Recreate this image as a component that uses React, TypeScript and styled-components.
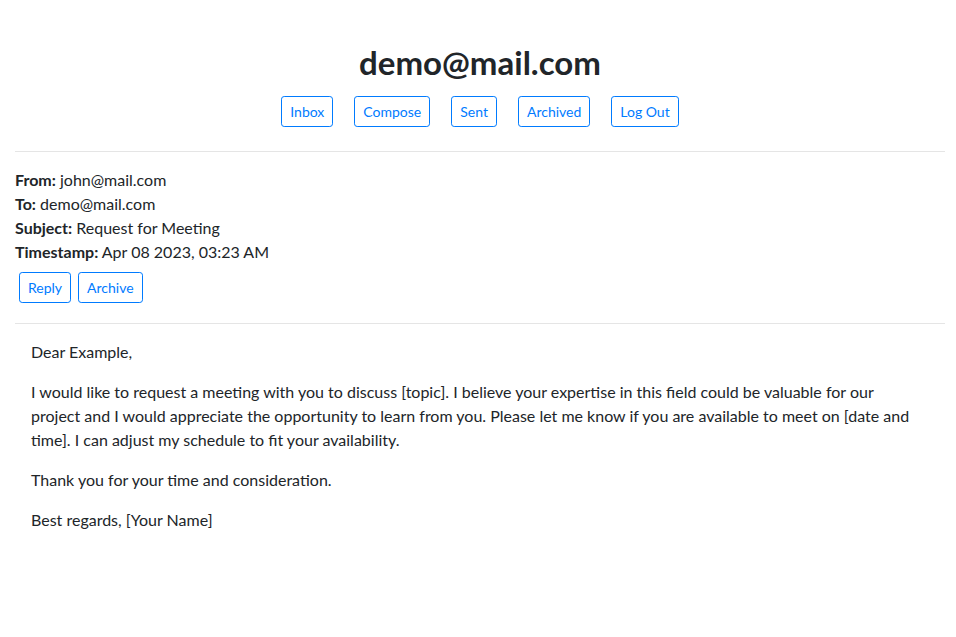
import * as React from 'react';
import styled, { createGlobalStyle } from 'styled-components';

const GlobalStyle = createGlobalStyle`
  html, body {
    margin: 0;
    padding: 0;
    background: #ffffff;
  }

  body {
    font-family: 'Segoe UI', Lato, 'Noto Sans', sans-serif;
    font-size: 16px;
    line-height: 1.5;
    color: #212529;
  }
`;

const Page = styled.div`
  padding: 0 11px 0 15px;
`;

const Header = styled.div`
  padding-top: 43px;
  text-align: center;
`;

const Title = styled.h2`
  margin: 0 0 15px 0;

  font-size: 33px;
  font-weight: 700;
  line-height: 38px;
`;

const Nav = styled.div`
  display: flex;
  justify-content: center;
  gap: 21px;
`;

const Button = styled.button`
  display: inline-block;
  box-sizing: border-box;
  height: 31px;
  padding: 4px 8px;

  font-family: inherit;
  font-size: 14px;
  line-height: 1.5;
  font-weight: 400;
  color: #007bff;

  background: transparent;
  border: 1px solid #007bff;
  border-radius: 3.2px;
  cursor: pointer;
`;

const Rule = styled.hr<{ $top: number }>`
  margin: ${p => p.$top}px 0 16px 0;

  border: 0;
  border-top: 1px solid rgba(0, 0, 0, 0.1);
`;

const Meta = styled.div`
  display: flex;
  flex-direction: column;
`;

const MetaRow = styled.div`
  line-height: 24px;
`;

const Label = styled.b`
  font-weight: 700;
`;

const Actions = styled.div`
  display: flex;
  gap: 7px;
  margin: 8px 0 0 4px;
`;

const Body = styled.div`
  padding: 0 30px 0 16px;
`;

const Para = styled.p`
  margin: 0 0 16px 0;
`;

interface MetaItem {
  label: string;
  value: string;
}

const meta: MetaItem[] = [
  { label: 'From:', value: 'john@mail.com' },
  { label: 'To:', value: 'demo@mail.com' },
  { label: 'Subject:', value: 'Request for Meeting' },
  { label: 'Timestamp:', value: 'Apr 08 2023, 03:23 AM' },
];

const paragraphs = [
  'Dear Example,',
  'I would like to request a meeting with you to discuss [topic]. I believe your expertise in this field could be valuable for our project and I would appreciate the opportunity to learn from you. Please let me know if you are available to meet on [date and time]. I can adjust my schedule to fit your availability.',
  'Thank you for your time and consideration.',
  'Best regards, [Your Name]',
];

const App: React.FC = () => {
  return (
    <Page>
      <GlobalStyle />

      <Header>
        <Title>demo@mail.com</Title>
        <Nav>
          <Button>Inbox</Button>
          <Button>Compose</Button>
          <Button>Sent</Button>
          <Button>Archived</Button>
          <Button>Log Out</Button>
        </Nav>
      </Header>

      <Rule $top={24} />

      <Meta>
        {meta.map(m => (
          <MetaRow key={m.label}>
            <Label>{m.label}</Label> {m.value}
          </MetaRow>
        ))}
      </Meta>

      <Actions>
        <Button>Reply</Button>
        <Button>Archive</Button>
      </Actions>

      <Rule $top={20} />

      <Body>
        {paragraphs.map((text, i) => (
          <Para key={i}>{text}</Para>
        ))}
      </Body>
    </Page>
  );
};

export default App;
